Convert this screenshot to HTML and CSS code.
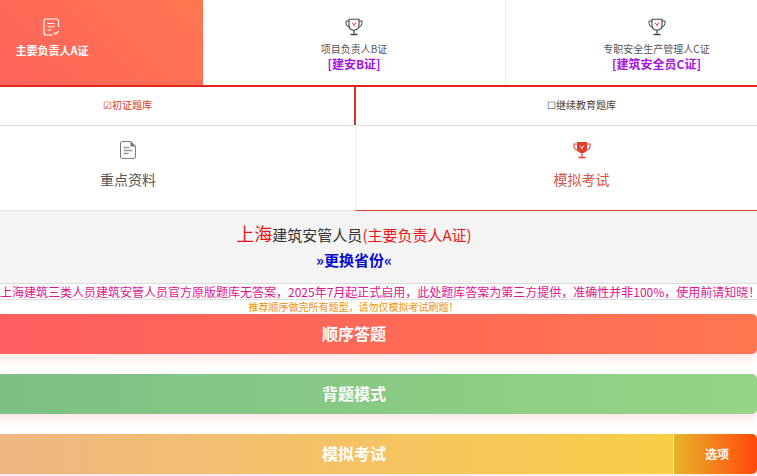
FILE: index.html
```html
<!DOCTYPE html>
<html lang="zh">
<head>
<meta charset="utf-8">
<title>建筑安管人员题库</title>
<link rel="stylesheet" href="styles.css">
</head>
<body>
<div class="page">
<nav class="certs">
  <a class="cert cert-a active">
    <svg class="ic" viewBox="0 0 18 18" width="18" height="18"><path d="M15.5 9V3.500Q15.500 1 13 1H3Q1 1 1 3v12q0 2 2 2h7" fill="none" stroke="#fff" stroke-width="1.200"/><path d="M4.500 5.500h7M4.500 8.800h7M4.500 12h4M11 14.500l1.600 1.600 3-3.200" fill="none" stroke="#fff" stroke-width="1.100"/></svg>
    <span class="cert-name">主要负责人A证</span>
  </a>
  <a class="cert cert-b">
    <svg class="ic" viewBox="0 0 18 18" width="18" height="18"><use href="#cup"/></svg>
    <span class="cert-name">项目负责人B证</span>
    <span class="cert-tag">[建安B证]</span>
  </a>
  <a class="cert cert-c">
    <svg class="ic" viewBox="0 0 18 18" width="18" height="18"><use href="#cup"/></svg>
    <span class="cert-name">专职安全生产管理人C证</span>
    <span class="cert-tag">[建筑安全员C证]</span>
  </a>
</nav>
<svg class="defs" width="0" height="0"><defs><g id="cup"><path d="M4 1.200h10v6.300q0 4.300-5 4.700-5-.4-5-4.700z" fill="none" stroke="#444" stroke-width="1.100"/><path d="M4 3H1v2.500Q1.300 8.500 4.800 9.500M14 3h3v2.500q-.3 3-3.800 4" fill="none" stroke="#444" stroke-width="1"/><path d="M9 12.300V15.500M5.500 16.500h7" fill="none" stroke="#444" stroke-width="1.300"/><path d="M6.800 4.800 9 6.800l2.200-2M9 6.800v1.500" fill="none" stroke="#e8392a" stroke-width="1"/></g></defs></svg>
<div class="banks">
  <a class="bank current">☑初证题库</a>
  <a class="bank">☐继续教育题库</a>
</div>
<div class="modes">
  <a class="mode">
    <svg viewBox="0 0 16 18" width="16" height="18"><path d="M1.500.6h9.500l4.400 4.400v11.200q0 1.200-1.200 1.200H1.500q-1 0-1-1.200V1.800q0-1.200 1-1.200z" fill="#fff" stroke="#777" stroke-width="1"/><path d="M10.500.6 15.400 5.500h-4.900z" fill="#777"/><path d="M3.500 6.500h6M3.500 9.500h9M3.500 12.500h5" stroke="#999" stroke-width="1.300"/></svg>
    <span>重点资料</span>
  </a>
  <a class="mode selected">
    <svg viewBox="0 0 18 18" width="18" height="18"><path d="M4 1h10v6.500q0 4.300-5 4.700-5-.4-5-4.700z" fill="#e23d2c"/><path d="M4 3H1v2.500Q1.300 8.500 4.800 9.500M14 3h3v2.500q-.3 3-3.800 4" fill="none" stroke="#e23d2c" stroke-width="1.100"/><path d="M9 12.300v3.200M5.500 16.500h7" fill="none" stroke="#e23d2c" stroke-width="1.300"/><path d="M6.800 4.800 9 6.800l2.200-2M9 6.800v1.500" fill="none" stroke="#fff" stroke-width="1"/></svg>
    <span>模拟考试</span>
  </a>
</div>
<section class="info">
  <h1 class="title"><span class="city">上海</span>建筑安管人员<span class="role">(主要负责人A证)</span></h1>
  <a class="switch">»更换省份«</a>
</section>
<div class="notice-band"><p class="notice">上海建筑三类人员建筑安管人员官方原版题库无答案，2025年7月起正式启用，此处题库答案为第三方提供，准确性并非100%，使用前请知晓！</p></div>
<p class="tip">推荐顺序做完所有题型，请勿仅模拟考试刷题！</p>
<div class="actions">
  <a class="btn btn-seq">顺序答题</a>
  <a class="btn btn-study">背题模式</a>
  <div class="btn btn-exam">
    <span class="exam-label">模拟考试</span>
    <span class="exam-opt">选项</span>
  </div>
</div>
</div>
</body>
</html>
```
FILE: styles.css
```css
* { box-sizing: border-box; }
html, body { margin: 0; padding: 0; height: 476px; overflow: hidden; background: #fff; }
body { width: 757px; font-family: "Noto Sans CJK SC", "Liberation Sans", sans-serif; color: #444; }
.page { width: 906px; margin-left: -99px; }
.defs { position: absolute; }
p, h1 { margin: 0; font-weight: normal; }

.certs { display: grid; grid-template-columns: 302px 302px 302px; height: 87px; border-bottom: 2px solid #e3261b; }
.cert { display: flex; flex-direction: column; align-items: center; padding-top: 18px; font-size: 10px; line-height: 14px; color: #555; }
.cert-name { margin-top: 6px; }
.cert-tag { margin-top: 1px; font-size: 12px; line-height: 14px; font-weight: bold; color: #a514e0; }
.cert-c { border-left: 1px solid #eee; }
.cert-a { background: linear-gradient(45deg, #ff5d5f, #ff7650); color: #fff; }
.cert-a .cert-name { font-weight: bold; margin-top: 7px; font-size: 11px; }

.banks { display: grid; grid-template-columns: 455px 451px; height: 39px; border-bottom: 1px solid #ddd; }
.bank { display: flex; align-items: center; justify-content: center; padding-bottom: 3px; font-size: 10px; color: #444; }
.bank.current { color: #d4402a; border-right: 2px solid #d8332a; }

.modes { display: grid; grid-template-columns: 454px 452px; height: 85px; border-bottom: 1px solid #ddd; }
.mode { display: flex; flex-direction: column; align-items: center; padding-top: 15px; font-size: 14px; line-height: 20px; color: #555; }
.mode svg { margin-bottom: 10px; }
.mode.selected { color: #d5523f; border-left: 1px solid #eee; border-bottom: 1px solid #e2412f; margin-bottom: -1px; }

.info { height: 72px; background: #f4f4f4; display: flex; flex-direction: column; align-items: center; padding-top: 9px; }
.title { font-size: 15px; line-height: 26px; color: #333; }
.city { font-size: 18px; color: #f01414; }
.role { color: #f01414; }
.switch { margin-top: 2px; font-size: 15px; line-height: 20px; font-weight: bold; color: #0a0ad2; }

.notice-band { height: 17px; padding-left: 99px; border-top: 1px solid #ddd; border-bottom: 1px solid #ddd; background: #fff; }
.notice { width: 757px; font-size: 12px; line-height: 15px; color: #e0148c; white-space: nowrap; }
.tip { height: 13px; padding-right: 1px; font-size: 10px; line-height: 13px; color: #f29011; text-align: center; white-space: nowrap; }

.actions { display: flex; flex-direction: column; gap: 20px; margin-top: 1px; }
.btn { display: flex; align-items: center; justify-content: center; width: 856px; height: 40px; padding: 0 0 2px 50px; border-radius: 5px; color: #fff; font-size: 16px; font-weight: bold; box-shadow: 0 6px 10px rgba(255, 120, 120, .18); }
.btn-seq { background: linear-gradient(90deg, #ff5e5e 11.600%, #ff7550); }
.btn-study { background: linear-gradient(90deg, #7cc084 11.600%, #95d585); }
.btn-exam { padding: 0; background: linear-gradient(90deg, #efb784 11.600%, #fbd03f); justify-content: flex-start; overflow: hidden; }
.exam-label { width: 772px; padding: 0 0 2px 134px; text-align: center; }
.exam-opt { display: flex; width: 84px; height: 100%; padding: 0 0 2px 3px; align-items: center; justify-content: center; font-size: 12px; border-left: 1px solid #fbe9b8; background: linear-gradient(90deg, #e8b42a, #ff480a); }
```
